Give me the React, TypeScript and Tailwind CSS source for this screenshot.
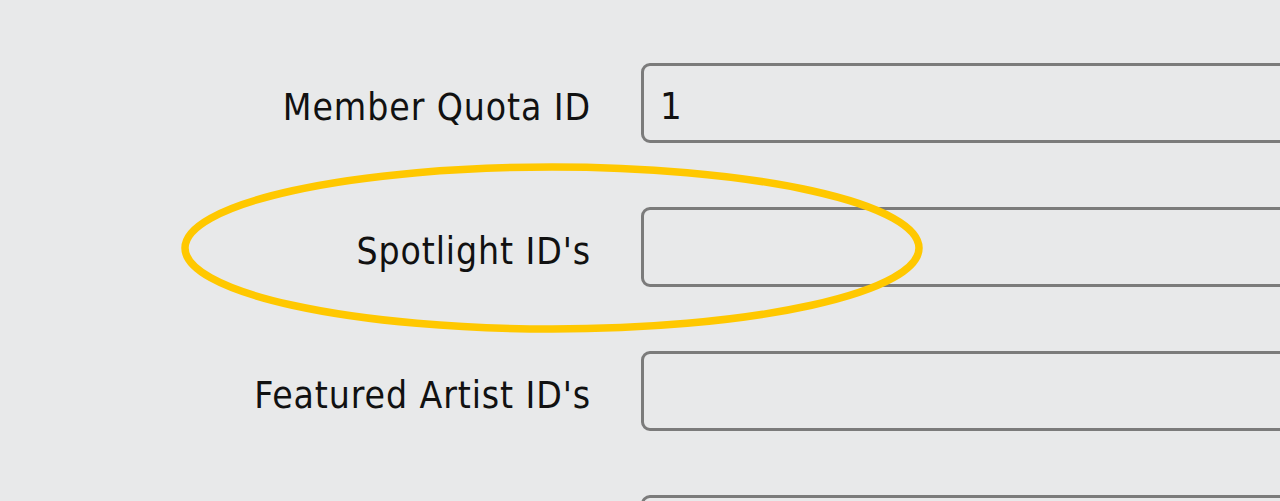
import React from "react";

const rows = [
  { label: "Member Quota ID", value: "1" },
  { label: "Spotlight ID's", value: "" },
  { label: "Featured Artist ID's", value: "" },
  { label: "", value: "" },
];

export default function App() {
  return (
    <div className="relative w-[1280px] h-[501px] overflow-hidden bg-[#e8e9ea]">
      <div
        className="flex flex-col gap-[64px] pt-[63px]"
        style={{ fontFamily: '"DejaVu Sans Condensed", "DejaVu Sans", sans-serif' }}
      >
        {rows.map((r, i) => (
          <div key={i} className="flex items-center">
            <div className="w-[591px] shrink-0 text-right text-[37px] leading-none tracking-[0.9px] text-[#111] pt-[9px]">
              {r.label}
            </div>
            <div className="ml-[50px] w-[700px] shrink-0 h-[80px] rounded-[9px] border-[3px] border-[#7b7b7b] flex items-center pl-[16px] pt-[7px] text-[38px] text-[#111]">
              {r.value}
            </div>
          </div>
        ))}
      </div>
      <svg
        className="absolute left-[180px] top-[162px]"
        width="744"
        height="172"
        viewBox="0 0 744 172"
      >
        <ellipse cx="372" cy="86" rx="367" ry="81" fill="none" stroke="#ffc800" strokeWidth="7.5" />
      </svg>
    </div>
  );
}
